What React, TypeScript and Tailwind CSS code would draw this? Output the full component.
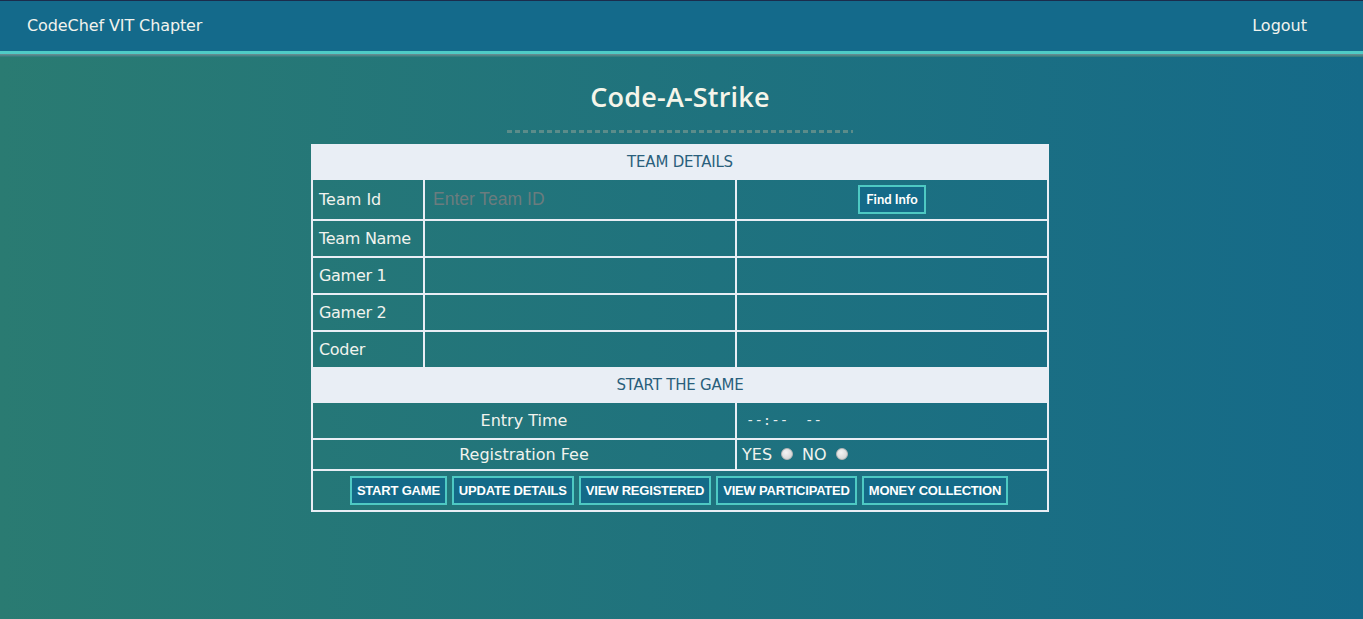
import React from "react";

const cellBg =
  "bg-fixed bg-[linear-gradient(90deg,#2a7b72_0%,#156a89_100%)]";

function Btn({ children }: { children: React.ReactNode }) {
  return (
    <button
      className="h-[29px] px-[5px] border-2 border-[#4ec9c3] bg-[#146a88] text-white text-[13px] font-bold leading-none tracking-[-0.2px]"
      style={{ fontFamily: '"Liberation Sans", Arial, sans-serif' }}
    >
      {children}
    </button>
  );
}

function Radio() {
  return (
    <span className="inline-block w-[12px] h-[12px] rounded-full bg-[radial-gradient(circle_at_40%_35%,#f4f4f4,#cdcdcd)] border border-[#b8b8b8]" />
  );
}

export default function App() {
  const rows = ["Team Name", "Gamer 1", "Gamer 2", "Coder"];
  return (
    <div
      className="min-h-screen w-full bg-fixed bg-[linear-gradient(90deg,#2a7b72_0%,#156a89_100%)] text-[#f1f3ee]"
      style={{ fontFamily: '"DejaVu Sans", "Open Sans", sans-serif' }}
    >
      <nav className="h-[51px] border-t border-[#1b2c4c] bg-[#146a8b] flex items-center justify-between pl-[27px] pr-[56px] text-[16px]">
        <span className="tracking-[-0.1px]">CodeChef VIT Chapter</span>
        <span>Logout</span>
      </nav>
      <div className="h-[3px] bg-[#4fcbc6]" />
      <div className="h-[3px] bg-[linear-gradient(180deg,#6f8f93,#2f7a7c)]" />

      <main className="flex flex-col items-center pr-[3px]">
        <h1
          className="mt-[24px] text-[27px] font-semibold text-[#f5f5ea] leading-[32px] tracking-[0.2px]"
          style={{ fontFamily: '"Open Sans", "DejaVu Sans", sans-serif' }}
        >
          Code-A-Strike
        </h1>
        <div className="mt-[17px] w-[346px] h-[3px] bg-[repeating-linear-gradient(90deg,#5b8c8a_0_5px,transparent_5px_8px)]" />

        <div className="mt-[11px] w-[738px] bg-[#e9eef5] p-[2px] flex flex-col gap-[2px] text-[16px]">
          <div className="h-[32px] flex items-center justify-center text-[#2a5f7c] text-[15px] tracking-[-0.2px]">
            TEAM DETAILS
          </div>
          <div className="grid grid-cols-[110px_310px_310px] gap-[2px] h-[39px]">
            <div className={`${cellBg} flex items-center pl-[6px]`}>Team Id</div>
            <div className={`${cellBg} flex items-center pl-[8px]`}>
              <input
                placeholder="Enter Team ID"
                className="w-full bg-transparent outline-none text-[17.5px] placeholder:text-[#6b7c7e]"
                style={{ fontFamily: '"Liberation Sans", Arial, sans-serif' }}
              />
            </div>
            <div className={`${cellBg} flex items-center justify-center`}>
              <button
                className="h-[29px] w-[68px] border-2 border-[#4ec9c3] bg-[#146a88] text-white text-[13px] font-bold leading-none"
                style={{ fontFamily: 'Lato, "Liberation Sans", sans-serif' }}
              >
                Find Info
              </button>
            </div>
          </div>
          {rows.map((r) => (
            <div key={r} className="grid grid-cols-[110px_310px_310px] gap-[2px] h-[35px]">
              <div className={`${cellBg} flex items-center pl-[6px] whitespace-nowrap tracking-[-0.3px]`}>{r}</div>
              <div className={cellBg} />
              <div className={cellBg} />
            </div>
          ))}
          <div className="h-[32px] flex items-center justify-center text-[#2a5f7c] text-[15px] tracking-[-0.2px]">
            START THE GAME
          </div>
          <div className="grid grid-cols-[422px_310px] gap-[2px] h-[35px]">
            <div className={`${cellBg} flex items-center justify-center`}>Entry Time</div>
            <div className={`${cellBg} flex items-center pl-[9px]`}>
              <span
                className="text-[14px] text-[#e6ecec] tracking-[0px] whitespace-pre"
                style={{ fontFamily: '"DejaVu Sans Mono", monospace' }}
              >
                {"--:--  --"}
              </span>
            </div>
          </div>
          <div className="grid grid-cols-[422px_310px] gap-[2px] h-[29px]">
            <div className={`${cellBg} flex items-center justify-center`}>Registration Fee</div>
            <div className={`${cellBg} flex items-center pl-[5px]`}>
              <span>YES</span>
              <span className="ml-[9px]"><Radio /></span>
              <span className="ml-[9px]">NO</span>
              <span className="ml-[9px]"><Radio /></span>
            </div>
          </div>
          <div className={`${cellBg} h-[39px] flex items-center justify-center gap-[5px] pr-[2px]`}>
            <Btn>START GAME</Btn>
            <Btn>UPDATE DETAILS</Btn>
            <Btn>VIEW REGISTERED</Btn>
            <Btn>VIEW PARTICIPATED</Btn>
            <Btn>MONEY COLLECTION</Btn>
          </div>
        </div>
      </main>
    </div>
  );
}
